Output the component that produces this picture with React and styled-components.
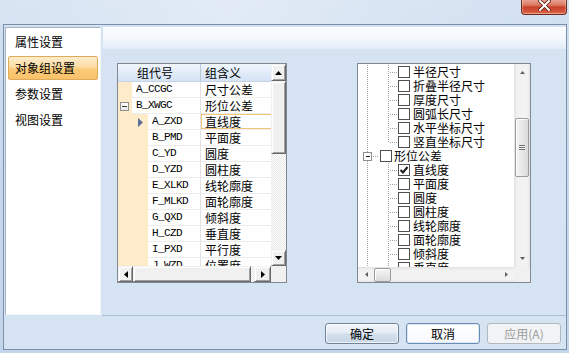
import React from 'react';
import styled, { createGlobalStyle, css } from 'styled-components';

const CJK = `"Noto Sans CJK SC", "Noto Sans", sans-serif`;
const MONO = `"Liberation Mono", "DejaVu Sans Mono", "Noto Sans CJK SC", monospace`;

const GlobalStyle = createGlobalStyle`
  html, body { margin: 0; padding: 0; }
  body {
    width: 569px; height: 353px; overflow: hidden;
    font-family: ${CJK}; font-size: 12px; color: #000;
  }
  #root { width: 569px; height: 353px; }
`;

const Frame = styled.div`
  width: 569px; height: 353px; box-sizing: border-box;
  display: flex; flex-direction: column;
  background: linear-gradient(180deg, #d3e1f1 0%, #c7d9ee 40%, #c3d5eb 100%);
`;

const TitleBar = styled.div`
  height: 24px; flex: none;
  display: flex; justify-content: flex-end; align-items: flex-start;
  padding-right: 2px;
  background: linear-gradient(90deg, rgba(255,255,255,0.1) 0%, rgba(255,255,255,0.35) 40%, rgba(255,255,255,0.15) 70%, rgba(255,255,255,0) 100%);
`;

const CloseButton = styled.div`
  width: 46px; height: 16px; box-sizing: border-box; margin-top: -1px;
  border: 1px solid #6f2a1e; border-top: none; border-radius: 0 0 4px 4px;
  background: linear-gradient(180deg, #e9a898 0%, #dc7a63 40%, #c8412a 55%, #d2563c 85%, #e27d5f 100%);
  box-shadow: inset 0 0 0 1px rgba(255,255,255,0.3);
  display: flex; align-items: center; justify-content: center;
`;

const Client = styled.div`
  flex: 1; min-height: 0;
  margin: 0 2px 3px 3px;
  border: 1px solid #7b8fa9;
  background: #d6e3f2;
  display: flex; flex-direction: column;
`;

const Body = styled.div`
  flex: 1; min-height: 0;
  display: flex; gap: 2px;
  padding: 2px 0 0 1px;
`;

const NavPanel = styled.div`
  width: 96px; flex: none; box-sizing: border-box;
  background: #fff;
  border: 1px solid; border-color: #a3b1c3 #f4f7fb #f4f7fb #a3b1c3;
  padding: 2px 1px;
  display: flex; flex-direction: column; gap: 2px;
`;

const NavItem = styled.div`
  height: 24px; flex: none; box-sizing: border-box;
  margin: 0 1px;
  padding-left: 6px;
  display: flex; align-items: center;
  font-size: 12px; line-height: 14px;
  border: 1px solid transparent; border-radius: 2px;
  ${({ $active }) => $active && css`
    border-color: #dfab5b;
    background: linear-gradient(180deg, #fdeccb 0%, #fcdca4 45%, #fbcb79 55%, #f9c26a 100%);
  `}
`;

const RightArea = styled.div`
  flex: 1; min-width: 0;
  display: flex; flex-direction: column;
`;

const HeaderStrip = styled.div`
  height: 22px; flex: none;
  background: linear-gradient(180deg, #fbfdfe 0%, #f3f7fc 55%, #e3ecf7 100%);
`;

const Panels = styled.div`
  display: flex; align-items: flex-start;
  gap: 70px;
  padding: 14px 0 0 14px;
`;

/* ---------- Grid ---------- */
const Grid = styled.div`
  width: 170px; height: 220px; box-sizing: border-box;
  border: 1px solid #828790; background: #fff;
  display: flex; flex-direction: column;
`;
const GridTop = styled.div`
  height: 202px; flex: none; display: flex;
`;
const GridData = styled.div`
  width: 153px; flex: none; display: flex; flex-direction: column;
`;
const GridHeader = styled.div`
  height: 18px; flex: none; box-sizing: border-box; display: flex;
  background: linear-gradient(180deg, #f1f6fd 0%, #e2ecf9 50%, #d5e3f5 100%);
  border-bottom: 1px solid #c4d3e7;
`;
const HeaderCell = styled.div`
  width: ${({ $w }) => $w}px; flex: none; box-sizing: border-box;
  padding-left: ${({ $pl }) => $pl}px;
  line-height: 17px; font-size: 12px;
  ${({ $divider }) => $divider && css`border-right: 1px solid #b7c7dc;`}
`;
const GridRows = styled.div`
  flex: 1; min-height: 0; overflow: hidden;
  display: flex; flex-direction: column;
`;
const GridRow = styled.div`
  height: 16px; flex: none; display: flex;
`;
const Indent = styled.div`
  width: ${({ $w }) => $w}px; flex: none;
  background: #fdebc9;
  display: flex; align-items: center;
  justify-content: ${({ $end }) => ($end ? 'flex-end' : 'flex-start')};
  padding: ${({ $end }) => ($end ? '0 5px 0 0' : '0 0 0 2px')};
  box-sizing: border-box;
`;
const Cell = styled.div`
  width: ${({ $w }) => $w}px; flex: none; box-sizing: border-box;
  padding-left: 4px;
  border-bottom: 1px solid #ececec;
  line-height: 15px; white-space: nowrap; overflow: hidden;
  ${({ $mono }) => $mono ? css`
    font-family: ${MONO}; font-size: 11px; letter-spacing: -0.6px;
  ` : css`
    font-family: ${CJK}; font-size: 12px;
  `}
  ${({ $divider }) => $divider && css`border-right: 1px solid #e2e2e2;`}
  ${({ $focus }) => $focus && css`box-shadow: inset 0 1px 0 #f3c47b, inset 0 -1px 0 #f3c47b, inset 1px 0 0 #f3c47b;`}
`;
const ExpandBox = styled.span`
  width: 9px; height: 9px; box-sizing: border-box;
  border: 1px solid #8e8f8f; background: linear-gradient(180deg, #fff, #e9e9e9);
  display: flex; align-items: center; justify-content: center;
  &::after { content: ''; width: 5px; height: 1px; background: #3a3a3a; }
`;

/* classic scrollbar */
const ClassicV = styled.div`
  width: 15px; flex: none; display: flex; flex-direction: column;
`;
const ClassicBtn = styled.div`
  flex: none; box-sizing: border-box;
  ${({ $w }) => $w ? css`width: ${$w}px;` : ''}
  ${({ $h }) => $h ? css`height: ${$h}px;` : ''}
  background: #f0f0f0;
  border: 1px solid; border-color: #f0f0f0 #696969 #696969 #f0f0f0;
  box-shadow: inset 1px 1px 0 #ffffff, inset -1px -1px 0 #a0a0a0;
  display: flex; align-items: center; justify-content: center;
`;
const CheckerTrack = styled.div`
  flex: 1;
  background: repeating-conic-gradient(#e6e6e6 0 25%, #ffffff 0 50%) 0 0 / 2px 2px;
`;
const GridBottom = styled.div`
  height: 16px; flex: none; display: flex;
`;
const ClassicH = styled.div`
  width: 153px; flex: none; display: flex;
`;
const Corner = styled.div`
  flex: 1; background: #f0f0f0;
`;

/* ---------- Tree ---------- */
const Tree = styled.div`
  width: 174px; height: 220px; box-sizing: border-box;
  border: 1px solid #828790; background: #fff;
  display: flex; flex-direction: column;
`;
const TreeTop = styled.div`
  height: 203px; flex: none; display: flex;
`;
const TreeContent = styled.div`
  width: 156px; flex: none; overflow: hidden;
  padding-top: 1px; box-sizing: border-box;
  display: flex; flex-direction: column;
`;
const TreeRow = styled.div`
  height: 14px; flex: none;
  display: flex; align-items: center;
  white-space: nowrap;
`;
const CheckBox = styled.span`
  width: 12px; height: 12px; flex: none; box-sizing: border-box;
  margin-left: ${({ $ml }) => $ml}px;
  border: 1px solid #505050; background: #fff;
  display: flex; align-items: center; justify-content: center;
`;
const TreeLabel = styled.span`
  margin-left: ${({ $ml }) => $ml}px;
  font-size: 12px; line-height: 14px;
`;
const ModernV = styled.div`
  width: 16px; flex: none; display: flex; flex-direction: column; align-items: center;
  background: linear-gradient(90deg, #e2e2e2 0%, #f1f1f1 20%, #f3f3f3 80%, #e6e6e6 100%);
`;
const ModernBtn = styled.div`
  flex: none;
  ${({ $w }) => $w ? css`width: ${$w}px;` : css`align-self: stretch;`}
  ${({ $h }) => $h ? css`height: ${$h}px;` : css`align-self: stretch;`}
  display: flex; align-items: center; justify-content: center;
`;
const Spacer = styled.div`
  flex: ${({ $h }) => ($h ? 'none' : 1)};
  ${({ $h }) => $h && css`height: ${$h}px;`}
`;
const ModernThumbV = styled.div`
  width: 14px; height: 59px; flex: none; box-sizing: border-box;
  border: 1px solid #9b9b9b; border-radius: 2px;
  background: linear-gradient(90deg, #f4f4f4 0%, #e9e9e9 50%, #dadada 100%);
  box-shadow: inset 1px 1px 0 #fff;
  display: flex; align-items: center; justify-content: center;
`;
const Grip = styled.span`
  width: 6px; height: 5px;
  background: repeating-linear-gradient(180deg, #6e6e6e 0 1px, #f8f8f8 1px 2px);
`;
const TreeBottom = styled.div`
  height: 15px; flex: none; display: flex;
`;
const ModernH = styled.div`
  width: 156px; flex: none; display: flex; align-items: center;
  background: linear-gradient(180deg, #e2e2e2 0%, #f1f1f1 20%, #f3f3f3 80%, #e6e6e6 100%);
`;
const ModernThumbH = styled.div`
  width: 17px; height: 14px; flex: none; box-sizing: border-box;
  border: 1px solid #9b9b9b; border-radius: 2px;
  background: linear-gradient(180deg, #f4f4f4 0%, #e9e9e9 50%, #dadada 100%);
  box-shadow: inset 1px 1px 0 #fff;
`;

/* ---------- Footer ---------- */
const Footer = styled.div`
  height: 34px; flex: none; box-sizing: border-box;
  margin-left: 98px;
  border-top: 1px solid #afc0d5;
  padding: 7px 5px 5px 0;
  display: flex; justify-content: flex-end; gap: 7px;
`;
const Button = styled.div`
  width: 74px; height: 21px; box-sizing: border-box;
  border-radius: 3px; font-size: 12px;
  display: flex; align-items: center; justify-content: center;
  ${({ $kind }) => $kind === 'default' ? css`
    border: 1px solid #6f8299;
    background: linear-gradient(180deg, #f2f6fb 0%, #e3ebf4 48%, #d3dfec 52%, #c8d6e6 100%);
    box-shadow: inset 0 0 0 1px rgba(255,255,255,0.7);
  ` : $kind === 'disabled' ? css`
    border: 1px solid #b2b8bf;
    background: #f2f3f5;
    color: #9b9b9b;
  ` : css`
    border: 1px solid #6b8cb4;
    background: linear-gradient(180deg, #ffffff 0%, #f6f8fb 100%);
    box-shadow: inset 0 0 0 1px #dbe7f4;
  `}
`;

/* ---------- drawings ---------- */
const Arrow = ({ dir, color = '#000', small }) => {
  const s = small ? 5 : 7;
  const t = small ? 3 : 4;
  const vert = dir === 'up' || dir === 'down';
  const w = vert ? s : t;
  const h = vert ? t : s;
  let pts;
  if (dir === 'up') pts = `0,${t} ${s / 2},0 ${s},${t}`;
  else if (dir === 'down') pts = `0,0 ${s / 2},${t} ${s},0`;
  else if (dir === 'left') pts = `${t},0 0,${s / 2} ${t},${s}`;
  else pts = `0,0 ${t},${s / 2} 0,${s}`;
  return (
    <svg width={w} height={h} viewBox={`0 0 ${w} ${h}`} style={{ display: 'block' }}>
      <polygon points={pts} fill={color} />
    </svg>
  );
};

const RowPointer = () => (
  <svg width="5" height="9" viewBox="0 0 5 9" style={{ display: 'block' }}>
    <polygon points="0,0 5,4.5 0,9" fill="#5c6f94" />
  </svg>
);

const DOT = '#a3a3a3';
const TreeGuide = ({ type, x }) => (
  <svg width="20" height="14" viewBox="0 0 20 14" style={{ display: 'block', flex: 'none' }} shapeRendering="crispEdges">
    {type === 'line' && <line x1={x + 0.5} y1="0" x2={x + 0.5} y2="14" stroke={DOT} strokeDasharray="1 1" />}
    {type === 'tee' && (
      <>
        <line x1={x + 0.5} y1="0" x2={x + 0.5} y2="14" stroke={DOT} strokeDasharray="1 1" />
        <line x1={x + 2} y1="7.5" x2="20" y2="7.5" stroke={DOT} strokeDasharray="1 1" />
      </>
    )}
    {type === 'ell' && (
      <>
        <line x1={x + 0.5} y1="0" x2={x + 0.5} y2="8" stroke={DOT} strokeDasharray="1 1" />
        <line x1={x + 2} y1="7.5" x2="20" y2="7.5" stroke={DOT} strokeDasharray="1 1" />
      </>
    )}
    {type === 'expander' && (
      <>
        <line x1={x + 0.5} y1="0" x2={x + 0.5} y2="3" stroke={DOT} strokeDasharray="1 1" />
        <line x1={x + 0.5} y1="12" x2={x + 0.5} y2="14" stroke={DOT} strokeDasharray="1 1" />
        <rect x={x - 3.5} y="3.5" width="8" height="8" fill="#fff" stroke="#8f8f8f" />
        <line x1={x - 1} y1="7.5" x2={x + 3} y2="7.5" stroke="#202020" />
        <line x1={x + 6} y1="7.5" x2="20" y2="7.5" stroke={DOT} strokeDasharray="1 1" />
      </>
    )}
  </svg>
);

const CheckMark = () => (
  <svg width="10" height="10" viewBox="0 0 10 10" style={{ display: 'block' }}>
    <polyline points="1.5,5 4,7.5 8.5,2" fill="none" stroke="#1a1a1a" strokeWidth="2" />
  </svg>
);

const CloseGlyph = () => (
  <svg width="13" height="11" viewBox="0 0 13 11" style={{ display: 'block', marginTop: '-3px' }}>
    <path d="M2 1 L11 10 M11 1 L2 10" stroke="#5a1a10" strokeWidth="3.6" strokeLinecap="square" />
    <path d="M2 1 L11 10 M11 1 L2 10" stroke="#ffffff" strokeWidth="2" strokeLinecap="square" />
  </svg>
);

/* ---------- data ---------- */
const navItems = ['属性设置', '对象组设置', '参数设置', '视图设置'];

const gridRows = [
  { lvl: 1, code: 'A_CCGC', name: '尺寸公差' },
  { lvl: 1, code: 'B_XWGC', name: '形位公差', expander: true },
  { lvl: 2, code: 'A_ZXD', name: '直线度', current: true },
  { lvl: 2, code: 'B_PMD', name: '平面度' },
  { lvl: 2, code: 'C_YD', name: '圆度' },
  { lvl: 2, code: 'D_YZD', name: '圆柱度' },
  { lvl: 2, code: 'E_XLKD', name: '线轮廓度' },
  { lvl: 2, code: 'F_MLKD', name: '面轮廓度' },
  { lvl: 2, code: 'G_QXD', name: '倾斜度' },
  { lvl: 2, code: 'H_CZD', name: '垂直度' },
  { lvl: 2, code: 'I_PXD', name: '平行度' },
  { lvl: 2, code: 'J_WZD', name: '位置度' },
];

const treeRows = [
  { text: '半径尺寸', guides: ['line', 'tee'] },
  { text: '折叠半径尺寸', guides: ['line', 'tee'] },
  { text: '厚度尺寸', guides: ['line', 'tee'] },
  { text: '圆弧长尺寸', guides: ['line', 'tee'] },
  { text: '水平坐标尺寸', guides: ['line', 'tee'] },
  { text: '竖直坐标尺寸', guides: ['line', 'ell'] },
  { text: '形位公差', guides: ['expander'], root: true },
  { text: '直线度', guides: ['line', 'tee'], checked: true },
  { text: '平面度', guides: ['line', 'tee'] },
  { text: '圆度', guides: ['line', 'tee'] },
  { text: '圆柱度', guides: ['line', 'tee'] },
  { text: '线轮廓度', guides: ['line', 'tee'] },
  { text: '面轮廓度', guides: ['line', 'tee'] },
  { text: '倾斜度', guides: ['line', 'tee'] },
  { text: '垂直度', guides: ['line', 'tee'] },
];

export default function App() {
  return (
    <>
      <GlobalStyle />
      <Frame>
        <TitleBar>
          <CloseButton><CloseGlyph /></CloseButton>
        </TitleBar>
        <Client>
          <Body>
            <NavPanel>
              {navItems.map((t) => (
                <NavItem key={t} $active={t === '对象组设置'}>{t}</NavItem>
              ))}
            </NavPanel>
            <RightArea>
              <HeaderStrip />
              <Panels>
                <Grid>
                  <GridTop>
                    <GridData>
                      <GridHeader>
                        <HeaderCell $w={83} $pl={19} $divider>组代号</HeaderCell>
                        <HeaderCell $w={70} $pl={4}>组含义</HeaderCell>
                      </GridHeader>
                      <GridRows>
                        {gridRows.map((r) => {
                          const iw = r.lvl === 1 ? 14 : 30;
                          return (
                            <GridRow key={r.code}>
                              <Indent $w={iw} $end={r.lvl === 2}>
                                {r.expander && <ExpandBox />}
                                {r.current && <RowPointer />}
                              </Indent>
                              <Cell $w={83 - iw} $mono $divider>{r.code}</Cell>
                              <Cell $w={70} $focus={r.current}>{r.name}</Cell>
                            </GridRow>
                          );
                        })}
                      </GridRows>
                    </GridData>
                    <ClassicV>
                      <ClassicBtn $h={17}><Arrow dir="up" /></ClassicBtn>
                      <ClassicBtn $h={73} />
                      <CheckerTrack />
                      <ClassicBtn $h={16}><Arrow dir="down" /></ClassicBtn>
                    </ClassicV>
                  </GridTop>
                  <GridBottom>
                    <ClassicH>
                      <ClassicBtn $w={15}><Arrow dir="left" /></ClassicBtn>
                      <ClassicBtn $w={118} />
                      <CheckerTrack />
                      <ClassicBtn $w={17}><Arrow dir="right" /></ClassicBtn>
                    </ClassicH>
                    <Corner />
                  </GridBottom>
                </Grid>

                <Tree>
                  <TreeTop>
                    <TreeContent>
                      {treeRows.map((r) => (
                        <TreeRow key={r.text}>
                          {r.guides.map((g, i) => (
                            <TreeGuide key={i} type={g} x={i === 0 ? 9 : 10} />
                          ))}
                          <CheckBox $ml={r.root ? 2 : 0}>{r.checked && <CheckMark />}</CheckBox>
                          <TreeLabel $ml={r.root ? 2 : 3}>{r.text}</TreeLabel>
                        </TreeRow>
                      ))}
                    </TreeContent>
                    <ModernV>
                      <ModernBtn $h={17}><Arrow dir="up" color="#5f5f5f" small /></ModernBtn>
                      <Spacer $h={37} />
                      <ModernThumbV><Grip /></ModernThumbV>
                      <Spacer />
                      <ModernBtn $h={17}><Arrow dir="down" color="#5f5f5f" small /></ModernBtn>
                    </ModernV>
                  </TreeTop>
                  <TreeBottom>
                    <ModernH>
                      <ModernBtn $w={16}><Arrow dir="left" color="#5f5f5f" small /></ModernBtn>
                      <ModernThumbH />
                      <Spacer />
                      <ModernBtn $w={16}><Arrow dir="right" color="#5f5f5f" small /></ModernBtn>
                    </ModernH>
                    <Corner />
                  </TreeBottom>
                </Tree>
              </Panels>
            </RightArea>
          </Body>
          <Footer>
            <Button $kind="default">确定</Button>
            <Button>取消</Button>
            <Button $kind="disabled">应用(A)</Button>
          </Footer>
        </Client>
      </Frame>
    </>
  );
}
